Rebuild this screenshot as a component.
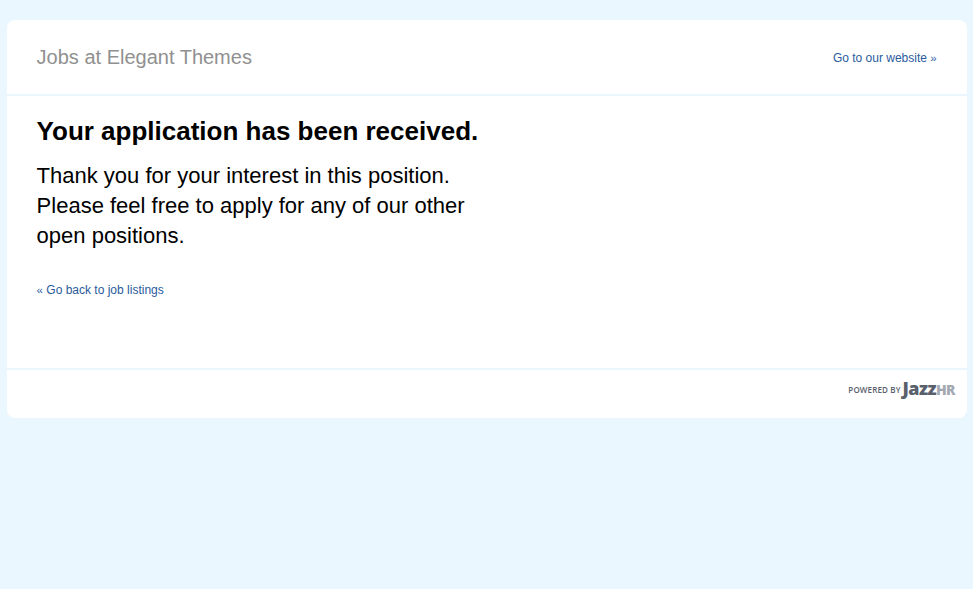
<div class="page">
  <div class="card">
    <header class="head">
      <span class="brand">Jobs at Elegant Themes</span>
      <a class="site" href="#top">Go to our website <span class="mark">»</span></a>
    </header>
    <main class="body">
      <h1>Your application has been received.</h1>
      <p class="msg">Thank you for your interest in this position.<br />Please feel free to apply for any of our other<br />open positions.</p>
      <a class="back" href="#top"><span class="mark">«</span> Go back to job listings</a>
    </main>
    <footer class="foot">
      <span class="pow">POWERED BY</span>
      <span class="logo"><span class="jazz">Jazz</span><span class="hr">HR</span></span>
    </footer>
  </div>
</div>

<style>
  :global(body) {
    margin: 0;
    background: #eaf7ff;
    font-family: "Liberation Sans", Arial, sans-serif;
  }
  .page {
    padding: 20px 6px 0 7px;
    height: 569px;
  }
  .card {
    background: #fff;
    border-radius: 8px;
    height: 398px;
    display: flex;
    flex-direction: column;
  }
  .head {
    height: 76px;
    box-sizing: border-box;
    padding: 0 30.3px 0 29.6px;
    border-bottom: 2px solid #eaf7ff;
    display: flex;
    align-items: center;
    justify-content: space-between;
  }
  .brand { font-size: 20px; color: #909090; }
  .site { font-size: 12px; color: #2a5a9c; text-decoration: none; padding-top: 1px; }
  .mark { font-size: 11.5px; color: #2f5fa8; }
  .body { flex: 1; padding: 20px 30px 0 29.6px; }
  h1 { margin: 0; font-size: 26px; line-height: 30px; color: #000; font-weight: 700; }
  .msg { margin: 15px 0 0; font-size: 22px; line-height: 30px; color: #000; width: 460px; }
  .back { display: block; margin-top: 32px; font-size: 12px; color: #2a5a9c; text-decoration: none; }
  .foot {
    height: 50px;
    box-sizing: border-box;
    border-top: 2px solid #eaf7ff;
    display: flex;
    align-items: center;
    justify-content: flex-end;
    padding: 0 12px 10px 0;
    gap: 2px;
  }
  .pow { font-family: "Open Sans", sans-serif; font-size: 8px; font-weight: 600; color: #59606c; letter-spacing: .15px; }
  .logo { font-family: "Open Sans", sans-serif; font-size: 18px; font-weight: 800; letter-spacing: -.6px; line-height: 16px; }
  .jazz { color: #59606c; }
  .hr { color: #a4a9b1; font-size: 14px; }
</style>
